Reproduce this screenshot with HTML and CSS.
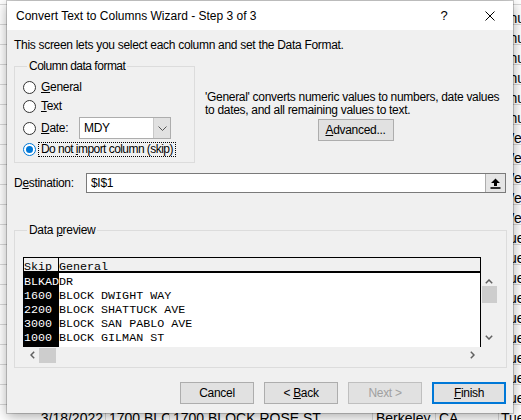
FILE: index.html
```html
<!DOCTYPE html>
<html>
<head>
<meta charset="utf-8">
<title>Convert Text to Columns Wizard</title>
<link rel="stylesheet" href="styles.css">
</head>
<body>
<div class="sheet">
  <div class="srow first"></div>
  <div class="srow"><span></span><span></span><span></span><span></span><span></span><span class="day">Thu</span></div>
  <div class="srow"><span></span><span></span><span></span><span></span><span></span><span class="day">Thu</span></div>
  <div class="srow"><span></span><span></span><span></span><span></span><span></span><span class="day">Thu</span></div>
  <div class="srow"><span></span><span></span><span></span><span></span><span></span><span class="day">Thu</span></div>
  <div class="srow"><span></span><span></span><span></span><span></span><span></span><span class="day">Thu</span></div>
  <div class="srow"><span></span><span></span><span></span><span></span><span></span><span class="day">Thu</span></div>
  <div class="srow"><span></span><span></span><span></span><span></span><span></span><span class="day">Wed</span></div>
  <div class="srow"><span></span><span></span><span></span><span></span><span></span><span class="day">Wed</span></div>
  <div class="srow"><span></span><span></span><span></span><span></span><span></span><span class="day">Wed</span></div>
  <div class="srow"><span></span><span></span><span></span><span></span><span></span><span class="day">Wed</span></div>
  <div class="srow"><span></span><span></span><span></span><span></span><span></span><span class="day">Wed</span></div>
  <div class="srow"><span></span><span></span><span></span><span></span><span></span><span class="day">Tue</span></div>
  <div class="srow"><span></span><span></span><span></span><span></span><span></span><span class="day">Tue</span></div>
  <div class="srow"><span></span><span></span><span></span><span></span><span></span><span class="day">Tue</span></div>
  <div class="srow"><span></span><span></span><span></span><span></span><span></span><span class="day">Tue</span></div>
  <div class="srow"><span></span><span></span><span></span><span></span><span></span><span class="day">Tue</span></div>
  <div class="srow"><span></span><span></span><span></span><span></span><span></span><span class="day">Tue</span></div>
  <div class="srow"><span></span><span></span><span></span><span></span><span></span><span class="day">Tue</span></div>
  <div class="srow"><span></span><span></span><span></span><span></span><span></span><span class="day">Tue</span></div>
  <div class="srow"><span></span><span></span><span></span><span></span><span></span><span class="day">Tue</span></div>
  <div class="srow"><span class="date">3/18/2022</span><span>1700 BLOCK</span><span>1700 BLOCK ROSE ST</span><span>Berkeley</span><span>CA</span><span class="day">Tue</span></div>
</div>

<div class="dialog">
  <div class="titlebar">
    <span class="title">Convert Text to Columns Wizard - Step 3 of 3</span>
    <span class="capbtn help">?</span>
    <span class="capbtn close">
      <svg width="10" height="10" viewBox="0 0 10 10"><path d="M0.5 0.5 L9.5 9.5 M9.5 0.5 L0.5 9.5" stroke="#000" stroke-width="1" fill="none"/></svg>
    </span>
  </div>
  <div class="content">
    <p class="intro">This screen lets you select each column and set the Data Format.</p>

    <div class="format-row">
      <fieldset class="group format">
        <legend>Column data format</legend>
        <label class="radio r-general"><span class="circle"></span><span><u>G</u>eneral</span></label>
        <label class="radio r-text"><span class="circle"></span><span><u>T</u>ext</span></label>
        <label class="radio r-date"><span class="circle"></span><span class="date-label"><u>D</u>ate:</span>
          <span class="combo"><span class="combo-val">MDY</span><span class="combo-btn"><svg width="9" height="5" viewBox="0 0 9 5"><path d="M0.5 0.5 L4.5 4.5 L8.5 0.5" stroke="#555" stroke-width="1" fill="none"/></svg></span></span>
        </label>
        <label class="radio r-skip"><span class="circle checked"></span><span class="focus">Do not <u>i</u>mport column (skip)</span></label>
      </fieldset>
      <div class="info">
        <p class="info-text">'General' converts numeric values to numbers, date values<br>to dates, and all remaining values to text.</p>
        <button class="btn adv"><u>A</u>dvanced...</button>
      </div>
    </div>

    <div class="dest-row">
      <span class="dest-label">D<u>e</u>stination:</span>
      <div class="dest-input">
        <span class="dest-val">$I$1</span>
        <span class="ref-btn"><svg width="11" height="11" viewBox="0 0 11 11"><path d="M5.5 0.5 L10 5 L7 5 L7 8 L4 8 L4 5 L1 5 Z" fill="#000"/><rect x="0.5" y="9.2" width="10" height="1.6" fill="#000"/></svg></span>
      </div>
    </div>

    <fieldset class="group preview">
      <legend>Data <u>p</u>review</legend>
      <div class="pv">
        <div class="pv-head"><span class="c1">Skip</span><span class="c2">General</span></div>
        <div class="pv-top-gap"></div>
        <div class="pv-body">
          <div class="pv-col1">
            <div>BLKAD</div><div>1600</div><div>2200</div><div>3000</div><div>1000</div>
          </div>
          <div class="pv-col2">
            <div>DR</div><div>BLOCK DWIGHT WAY</div><div>BLOCK SHATTUCK AVE</div><div>BLOCK SAN PABLO AVE</div><div>BLOCK GILMAN ST</div>
          </div>
        </div>
        <div class="vscroll">
          <svg class="arr" width="8" height="5" viewBox="0 0 8 5"><path d="M0.8 4.2 L4 1 L7.2 4.2" stroke="#606060" stroke-width="1.5" fill="none"/></svg>
          <span class="vthumb"></span>
          <span class="vspace"></span>
          <svg class="arr" width="8" height="5" viewBox="0 0 8 5"><path d="M0.8 0.8 L4 4 L7.2 0.8" stroke="#606060" stroke-width="1.5" fill="none"/></svg>
        </div>
        <div class="hscroll">
          <svg class="arr" width="5" height="8" viewBox="0 0 5 8"><path d="M4.2 0.8 L1 4 L4.2 7.2" stroke="#606060" stroke-width="1.5" fill="none"/></svg>
          <span class="hthumb"></span>
          <span class="hspace"></span>
          <svg class="arr" width="5" height="8" viewBox="0 0 5 8"><path d="M0.8 0.8 L4 4 L0.8 7.2" stroke="#606060" stroke-width="1.5" fill="none"/></svg>
        </div>
        <div class="corner"></div>
      </div>
    </fieldset>

    <div class="buttons">
      <button class="btn">Cancel</button>
      <button class="btn">&lt; <u>B</u>ack</button>
      <button class="btn disabled">Next &gt;</button>
      <button class="btn default"><u>F</u>inish</button>
    </div>
  </div>
</div>
</body>
</html>
```

FILE: styles.css
```css
* { box-sizing: border-box; }

html, body {
  margin: 0;
  padding: 0;
  width: 521px;
  height: 420px;
  overflow: hidden;
  background: #fff;
}

body {
  position: relative;
  font-family: "Liberation Sans", Arial, sans-serif;
  font-size: 12px;
  color: #000;
}

/* background spreadsheet */
.sheet {
  width: 521px;
  height: 420px;
  overflow: hidden;
  font-family: "Liberation Sans", Arial, sans-serif;
  font-size: 14px;
}

.srow {
  display: grid;
  grid-template-columns: 106px 64px 203px 63px 63px 60px;
  height: 20px;
  border-bottom: 1px solid #d8d8d8;
}

.srow.first { height: 5px; }

.srow span {
  border-right: 1px solid #d8d8d8;
  padding: 3px 0 0 3px;
  line-height: 20px;
  white-space: nowrap;
  overflow: hidden;
}

.srow span.date {
  text-align: right;
  padding-right: 2px;
}

.srow span.day { padding-left: 2px; }

/* dialog window */
.dialog {
  position: absolute;
  left: 7px;
  top: 1px;
  width: 506px;
  height: 412px;
  background: #f0f0f0;
  box-shadow: 0 0 0 1px rgba(0, 0, 0, 0.18), 0 3px 12px rgba(0, 0, 0, 0.35);
}

.titlebar {
  display: flex;
  align-items: center;
  height: 29px;
  background: #fff;
}

.title {
  flex: 1;
  padding-left: 9px;
  font-size: 12px;
  white-space: nowrap;
}

.capbtn {
  width: 46px;
  height: 29px;
  display: flex;
  align-items: center;
  justify-content: center;
}

.help { font-size: 13px; }

.content {
  padding: 0 7px;
  letter-spacing: -0.3px;
}

.intro {
  margin: 7px 0 0;
  line-height: 16px;
  white-space: nowrap;
}

.format-row {
  display: flex;
  margin-top: 5px;
}

.group {
  margin: 0;
  border: 1px solid #dcdcdc;
  min-width: 0;
}

.group legend {
  padding: 0 2px;
  margin-left: 4px;
  line-height: 16px;
  white-space: nowrap;
}

.format legend { letter-spacing: -0.5px; }

.format {
  flex: none;
  width: 181px;
  padding: 0 0 4px 8px;
}

.radio {
  display: flex;
  align-items: center;
  white-space: nowrap;
}

.r-general { height: 18px; margin-top: 4px; }
.r-text { height: 18px; margin-top: 1px; }
.r-date { height: 22px; margin-top: 2px; }
.r-skip { height: 17px; margin-top: 2px; }

.circle {
  width: 13px;
  height: 13px;
  border: 1px solid #333;
  border-radius: 50%;
  background: #fff;
  margin-right: 5px;
  flex: none;
  display: flex;
  align-items: center;
  justify-content: center;
}

.circle.checked {
  border-color: #0078d7;
  margin-right: 2px;
}

.circle.checked::after {
  content: "";
  width: 7px;
  height: 7px;
  border-radius: 50%;
  background: #0078d7;
}

.focus {
  border: 1px dotted #000;
  padding: 0 2px;
  line-height: 13px;
  letter-spacing: -0.55px;
}

.date-label {
  width: 38px;
}

.combo {
  display: flex;
  width: 92px;
  height: 22px;
  border: 1px solid #adadad;
  background: #fff;
}

.combo-val {
  flex: 1;
  padding-left: 4px;
  line-height: 20px;
}

.combo-btn {
  width: 17px;
  background: #e1e1e1;
  border-left: 1px solid #c8c8c8;
  display: flex;
  align-items: center;
  justify-content: center;
}

.info {
  flex: 1;
  min-width: 0;
  margin-left: 10px;
  padding-top: 33px;
  display: flex;
  flex-direction: column;
  align-items: center;
}

.info-text {
  align-self: flex-start;
  margin: 0;
  line-height: 13px;
  white-space: nowrap;
}

.btn {
  font-family: "Liberation Sans", Arial, sans-serif;
  font-size: 12px;
  letter-spacing: -0.3px;
  color: #000;
  background: #e1e1e1;
  border: 1px solid #adadad;
  padding: 0;
  margin: 0;
  width: 74px;
  height: 22px;
}

.adv {
  width: 76px;
  margin-top: 2px;
}

.dest-row {
  display: flex;
  align-items: center;
  height: 20px;
  margin-top: 10px;
}

.dest-label {
  width: 72px;
}

.dest-input {
  flex: 1;
  height: 20px;
  display: flex;
  align-items: stretch;
  border: 1px solid #7a7a7a;
  background: #fff;
}

.dest-val {
  flex: 1;
  padding-left: 4px;
  line-height: 18px;
}

.ref-btn {
  width: 20px;
  background: #e5e5e5;
  border-left: 1px solid #adadad;
  display: flex;
  align-items: center;
  justify-content: center;
}

.preview {
  width: 493px;
  margin-top: 29px;
  padding: 0 0 4px 8px;
}

.pv {
  margin-top: 19px;
  display: grid;
  grid-template-columns: 458px 16px;
  grid-template-rows: 16px 74px 16px;
  font-family: "Liberation Mono", "Courier New", monospace;
  font-size: 11.7px;
  letter-spacing: 0;
}

.pv-head {
  display: flex;
  border: 1px solid #000;
  border-bottom: 2px solid #000;
  background: #f0f0f0;
  line-height: 12px;
}

.pv-head span {
  padding-top: 3px;
}

.pv-head .c1 {
  width: 35px;
  border-right: 1px solid #000;
}

.pv-body {
  display: flex;
  border-left: 1px solid #000;
  border-right: 1px solid #000;
  background: #fff;
  line-height: 14px;
}

.pv-col1 {
  width: 35px;
  background: #000;
  color: #fff;
  padding-top: 2px;
  overflow: hidden;
  white-space: nowrap;
}

.pv-col2 {
  padding-top: 2px;
  white-space: nowrap;
}

.vscroll {
  display: flex;
  flex-direction: column;
  align-items: center;
  background: #f0f0f0;
  padding: 6px 0 7px;
}

.vthumb {
  width: 15px;
  height: 17px;
  background: #cdcdcd;
  margin-top: 2px;
}

.vspace { flex: 1; }

.hscroll {
  display: flex;
  align-items: center;
  background: #f0f0f0;
  padding: 0 6px 0 7px;
}

.hthumb {
  width: 17px;
  height: 15px;
  background: #cdcdcd;
  margin-left: 4px;
}

.hspace { flex: 1; }

.arr { flex: none; }

.corner { background: #f0f0f0; }

.buttons {
  display: flex;
  justify-content: flex-end;
  gap: 10px;
  margin-top: 14px;
}

.btn.disabled {
  color: #a0a0a0;
  border-color: #bfbfbf;
}

.btn.default {
  border: 2px solid #0078d7;
}
```
